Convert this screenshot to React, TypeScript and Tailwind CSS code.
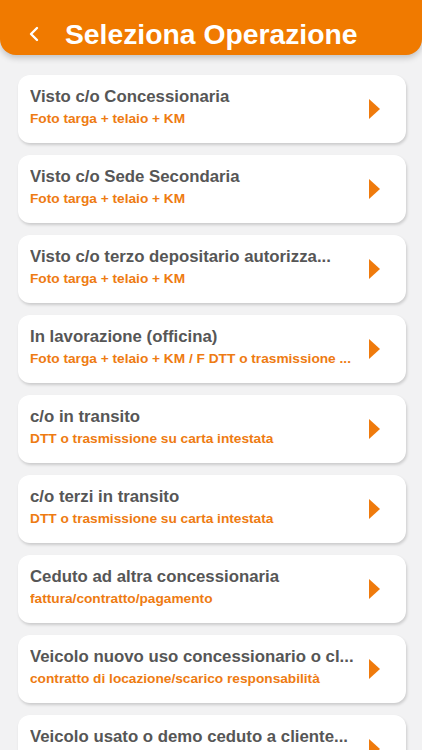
import { ChevronLeft } from 'lucide-react';

interface Operazione {
  title: string;
  subtitle: string;
}

const OPERAZIONI: Operazione[] = [
  { title: 'Visto c/o Concessionaria', subtitle: 'Foto targa + telaio + KM' },
  { title: 'Visto c/o Sede Secondaria', subtitle: 'Foto targa + telaio + KM' },
  { title: 'Visto c/o terzo depositario autorizza...', subtitle: 'Foto targa + telaio + KM' },
  { title: 'In lavorazione (officina)', subtitle: 'Foto targa + telaio + KM / F DTT o trasmissione ...' },
  { title: 'c/o in transito', subtitle: 'DTT o trasmissione su carta intestata' },
  { title: 'c/o terzi in transito', subtitle: 'DTT o trasmissione su carta intestata' },
  { title: 'Ceduto ad altra concessionaria', subtitle: 'fattura/contratto/pagamento' },
  { title: 'Veicolo nuovo uso concessionario o cl...', subtitle: 'contratto di locazione/scarico responsabilità' },
  { title: 'Veicolo usato o demo ceduto a cliente...', subtitle: 'contratto di vendita' },
];

function OperazioneCard({ op }: { op: Operazione }) {
  return (
    <button className="flex h-[68px] w-full items-center rounded-[12px] bg-white pl-[12px] pr-[26px] text-left shadow-[1px_2px_3px_rgba(0,0,0,0.16)]">
      <div className="min-w-0 flex-1 pb-[3px]">
        <p className="overflow-hidden whitespace-nowrap text-[16.8px] font-bold leading-[20px] text-[#565656]">{op.title}</p>
        <p className="mt-[3px] overflow-hidden whitespace-nowrap text-[13.7px] font-bold leading-[18px] text-[#ee7b12]">{op.subtitle}</p>
      </div>
      <svg width="11" height="20" viewBox="0 0 11 20" className="ml-[12px] flex-shrink-0">
        <path d="M0 0 L11 10 L0 20 Z" fill="#ef7a0c" />
      </svg>
    </button>
  );
}

export default function App() {
  return (
    <div className="min-h-screen bg-[#f2f2f3] font-['Liberation_Sans',Arial,sans-serif]">
      <header className="flex h-[55px] items-center rounded-b-[16px] bg-[#f07a00] pt-[13px] shadow-[0_3px_6px_rgba(0,0,0,0.2)]">
        <ChevronLeft className="ml-[22px] h-[24px] w-[24px] text-white" strokeWidth={2.4} />
        <h1 className="ml-[19px] text-[28.3px] font-bold text-white">Seleziona Operazione</h1>
      </header>

      <div className="flex flex-col gap-[12px] pl-[18px] pr-[16px] pt-[20px] pb-[20px]">
        {OPERAZIONI.map((op) => (
          <OperazioneCard key={op.title} op={op} />
        ))}
      </div>
    </div>
  );
}
